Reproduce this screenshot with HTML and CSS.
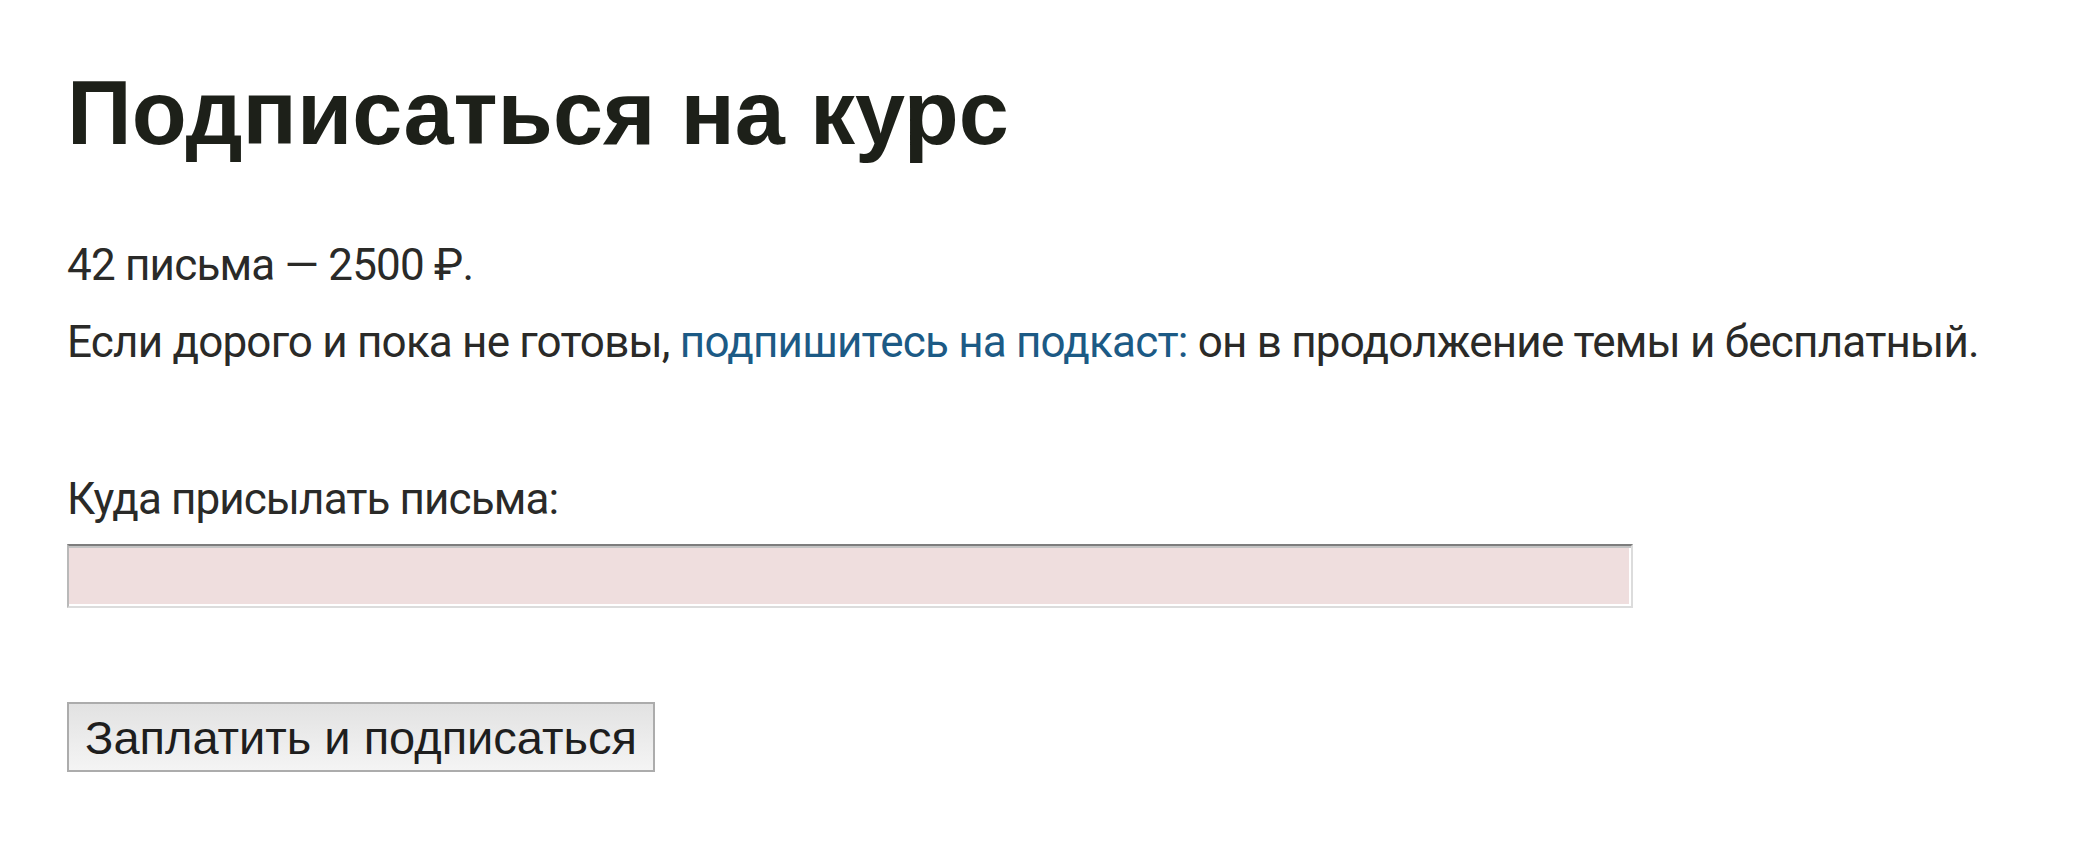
FILE: index.html
```html
<!DOCTYPE html>
<html lang="ru">
<head>
    <meta charset="UTF-8">
    <meta name="viewport" content="width=device-width, initial-scale=1.0">
    <title>Подписаться на курс</title>
    <link rel="stylesheet" href="styles.css">
</head>
<body>
    <div class="page">
        <h1 class="title">Подписаться на курс</h1>
        <p class="text">42 письма — 2500 ₽.</p>
        <p class="text">Если дорого и пока не готовы, <a href="#" class="link">подпишитесь на подкаст:</a> он в продолжение темы и бесплатный.</p>

        <form class="subscribe">
            <label class="label" for="email">Куда присылать письма:</label>
            <input type="email" id="email" class="field">
            <button type="button" class="submit">Заплатить и подписаться</button>
        </form>
    </div>
</body>
</html>
```

FILE: styles.css
```css
body {
    margin: 0;
    background: #fff;
    font-family: Roboto, "Noto Sans", sans-serif;
    color: #2a2a28;
}
.page {
    padding: 48px 67px 0;
}
.title {
    margin: 0;
    font-family: "Liberation Sans", Arial, sans-serif;
    font-weight: bold;
    font-size: 90px;
    line-height: 130px;
    color: #1d2019;
}
.text {
    margin: 0;
    font-size: 44px;
    line-height: 77px;
    letter-spacing: -0.8px;
    white-space: nowrap;
}
.title + .text {
    margin-top: 49px;
}
.link {
    color: #1c5a85;
    text-decoration: none;
}
.subscribe {
    display: flex;
    flex-direction: column;
    align-items: flex-start;
    margin-top: 80px;
}
.label {
    font-size: 44px;
    line-height: 77px;
    letter-spacing: -0.9px;
}
.field {
    box-sizing: border-box;
    width: 1566px;
    height: 64px;
    margin: 6px 0 0;
    border-style: solid;
    border-width: 2px;
    border-color: #7d7d7d #dcdcdc #dcdcdc #b9b9b9;
    box-shadow: inset 0 2px 0 #c4c4c4, inset -2px -2px 0 #fff;
    background: #efdede;
    outline: none;
}
.submit {
    margin-top: 94px;
    box-sizing: border-box;
    height: 70px;
    padding: 0 16px;
    font-family: "Liberation Sans", Arial, sans-serif;
    font-size: 47px;
    color: #1e1e1e;
    border: 2px solid #acacac;
    border-radius: 0;
    background: linear-gradient(#e2e2e2, #f4f4f4);
}
```
